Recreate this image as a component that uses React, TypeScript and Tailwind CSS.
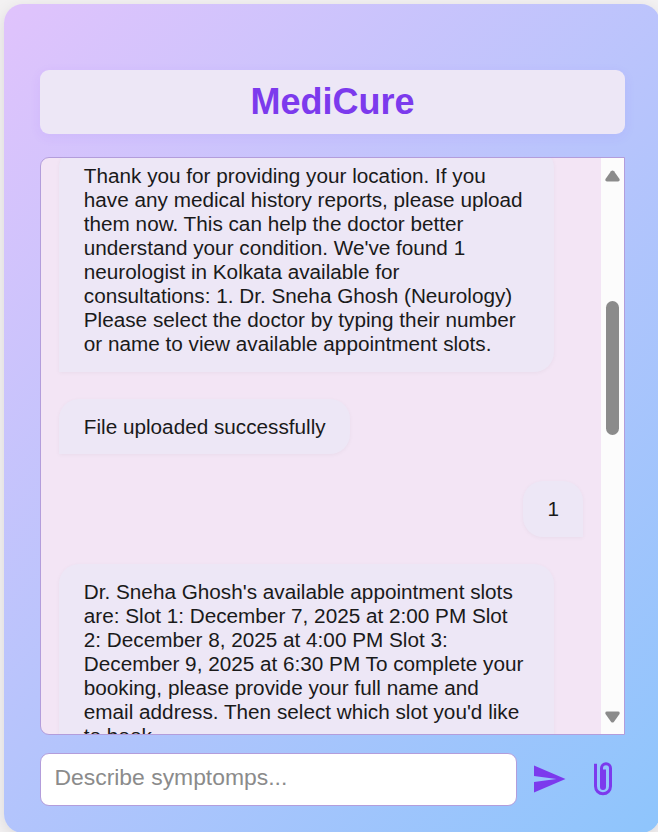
import { MdSend } from "react-icons/md";

const bubble =
  "bg-[#ede7f6] pl-[24.8px] pr-[24px] text-[20.72px] leading-6 text-[#1a1a1a] shadow-[0_1px_4px_rgba(0,0,0,0.045)]";

function Bot({ lines, className = "" }: { lines: string[]; className?: string }) {
  return (
    <div className={`${bubble} self-start whitespace-nowrap rounded-[20px] rounded-bl-none ${className}`}>
      {lines.map((l) => (
        <div key={l}>{l}</div>
      ))}
    </div>
  );
}

export default function App() {
  return (
    <div className="h-[832px] w-[658px] overflow-hidden bg-[#f3f1f2] pl-1 pt-1 font-['Liberation_Sans',Arial,sans-serif]">
      <div className="flex h-[829px] w-[656px] flex-col rounded-[19px] bg-[linear-gradient(135deg,#e0c3fc,#8ec5fc)] pl-9 pt-[66px] shadow-[0_4px_15px_rgba(0,0,0,0.1)]">
        <h1 className="flex h-16 w-[585px] items-center justify-center rounded-[9px] bg-[#ede7f6] text-[36px] font-bold text-[#7c3aed] shadow-[0_3px_12px_rgba(124,58,237,0.08)]">
          MediCure
        </h1>
        <div className="mt-[23px] flex h-[578px] w-[585px] overflow-hidden rounded-l-[9px] border border-[#b39ddb] bg-[#f3e5f5]">
          <div className="flex flex-1 flex-col overflow-hidden pl-[18px] pr-[18px]">
            <Bot
              className="-mt-[10px] w-[495px] shrink-0 py-4"
              lines={[
                "Thank you for providing your location. If you",
                "have any medical history reports, please upload",
                "them now. This can help the doctor better",
                "understand your condition. We've found 1",
                "neurologist in Kolkata available for",
                "consultations: 1. Dr. Sneha Ghosh (Neurology)",
                "Please select the doctor by typing their number",
                "or name to view available appointment slots.",
              ]}
            />
            <Bot className="mt-[27px] shrink-0 pb-[15px] pt-4" lines={["File uploaded successfully"]} />
            <div className={`${bubble} mt-[27px] shrink-0 self-end rounded-[20px] rounded-br-none py-4`}>1</div>
            <Bot
              className="mt-[27px] w-[495px] shrink-0 py-4"
              lines={[
                "Dr. Sneha Ghosh's available appointment slots",
                "are: Slot 1: December 7, 2025 at 2:00 PM Slot",
                "2: December 8, 2025 at 4:00 PM Slot 3:",
                "December 9, 2025 at 6:30 PM To complete your",
                "booking, please provide your full name and",
                "email address. Then select which slot you'd like",
                "to book.",
              ]}
            />
          </div>
          <div className="flex w-[23px] flex-col items-center bg-[#fcfcfc] pb-[11px] pt-[12px]">
            <svg width="15" height="12" viewBox="0 0 15 12" fill="#8b8b8b">
              <path d="M6 1.3Q7.5-.5 9 1.3L14.5 9Q15.300 11.500 13 11.500H2Q-.3 11.500.5 9Z" />
            </svg>
            <div className="mt-[119px] h-[134px] w-[13px] rounded-full bg-[#8b8b8b]" />
            <svg className="mt-auto" width="15" height="12" viewBox="0 0 15 12" fill="#8b8b8b">
              <path d="M6 10.700Q7.500 12.500 9 10.700L14.500 3Q15.300.5 13 .5H2Q-.3.5.5 3Z" />
            </svg>
          </div>
        </div>
        <div className="mt-[18px] flex items-start">
          <input
            className="h-[53px] w-[477px] rounded-[9px] border border-[#b39ddb] bg-white px-[13.5px] pb-[4px] text-[22.9px] text-[#1a1a1a] outline-none placeholder:text-[#8b8b8b]"
            placeholder="Describe symptomps..."
          />
          <button className="ml-[14px] mt-[8px]" aria-label="Send">
            <MdSend size={36} color="#7c3aed" />
          </button>
          <button className="ml-[17px] mt-[8px]" aria-label="Attach">
            <svg width="36" height="36" viewBox="0 0 36 36" fill="none" stroke="#7c3aed" strokeWidth="3">
              <path d="M11.500 2.700V25.300a7.500 7.500 0 0 0 15 0V7.300a4.500 4.500 0 0 0-9 0V26a1.500 1.500 0 0 0 3 0V8.500" />
            </svg>
          </button>
        </div>
      </div>
    </div>
  );
}
